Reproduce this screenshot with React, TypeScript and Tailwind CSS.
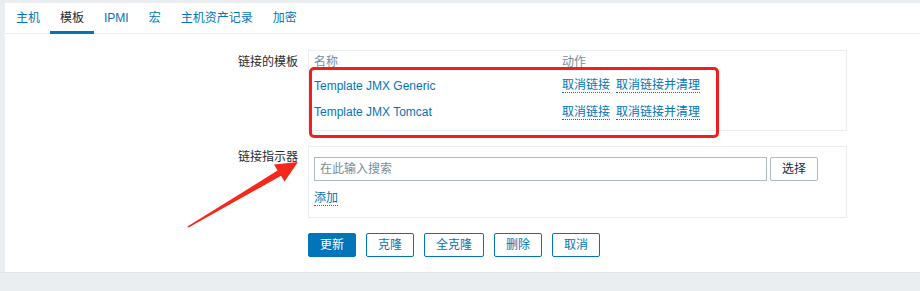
import React from "react";

const font = { fontFamily: '"Liberation Sans", Arial, "Noto Sans CJK SC", sans-serif' };

function Tab({ label, active }: { label: string; active?: boolean }) {
  return (
    <div
      className={
        "relative h-[30px] px-[10px] flex items-center text-[12px] " +
        (active ? "text-[#1f2c33]" : "text-[#0275b8]")
      }
    >
      {label}
      {active && <div className="absolute left-0 right-0 bottom-[-1px] h-[3px] bg-[#0275b8]" />}
    </div>
  );
}

function DLink({ children }: { children: React.ReactNode }) {
  return (
    <span className="text-[#0275b8] border-b border-dotted border-[#0275b8] leading-[14px]">{children}</span>
  );
}

function Btn({ children, primary }: { children: React.ReactNode; primary?: boolean }) {
  return (
    <div
      className={
        "h-[24px] px-[11px] flex items-center rounded-[2px] border text-[12px] " +
        (primary
          ? "bg-[#0275b8] border-[#0275b8] text-white"
          : "bg-white border-[#0275b8] text-[#0275b8]")
      }
    >
      {children}
    </div>
  );
}

export default function App() {
  return (
    <div className="relative w-[920px] h-[291px] bg-[#ebeef0] pt-[3px] pl-[5px] overflow-hidden" style={font}>
      <div className="bg-white h-[269px] flex flex-col">
        <div className="flex pl-[1px] border-b border-[#ebeef0]">
          <Tab label="主机" />
          <Tab label="模板" active />
          <Tab label="IPMI" />
          <Tab label="宏" />
          <Tab label="主机资产记录" />
          <Tab label="加密" />
        </div>
        <div className="pt-[16px] flex flex-col">
          {/* Row 1 */}
          <div className="flex">
            <div className="w-[293px] text-right text-[12px] text-[#1f2c33] pt-[5px] leading-[14px]">链接的模板</div>
            <div className="ml-[10px] w-[539px] h-[81px] border border-[#ebeef0] px-[5px] text-[12px]">
              <div className="flex h-[22px] items-center text-[#768d99]">
                <div className="w-[248px]">名称</div>
                <div>动作</div>
              </div>
              <div className="flex h-[25px] items-center">
                <div className="w-[248px] text-[#0275b8]">Template JMX Generic</div>
                <div className="flex gap-[6px]">
                  <DLink>取消链接</DLink>
                  <DLink>取消链接并清理</DLink>
                </div>
              </div>
              <div className="flex h-[28px] items-center">
                <div className="w-[248px] text-[#0275b8]">Template JMX Tomcat</div>
                <div className="flex gap-[6px]">
                  <DLink>取消链接</DLink>
                  <DLink>取消链接并清理</DLink>
                </div>
              </div>
            </div>
          </div>
          {/* Row 2 */}
          <div className="flex mt-[15px]">
            <div className="w-[293px] text-right text-[12px] text-[#1f2c33] pt-[4px] leading-[14px]">链接指示器</div>
            <div className="ml-[10px] w-[539px] h-[72px] border border-[#ebeef0] px-[5px] pt-[10px] text-[12px]">
              <div className="flex gap-[3px]">
                <div className="w-[453px] h-[24px] border border-[#acbbc2] flex items-center px-[5px] text-[#768d99]">
                  在此输入搜索
                </div>
                <div className="w-[48px] h-[24px] border border-[#acbbc2] rounded-[2px] flex items-center justify-center text-[#1f2c33]">
                  选择
                </div>
              </div>
              <div className="mt-[10px] flex">
                <DLink>添加</DLink>
              </div>
            </div>
          </div>
          {/* Buttons */}
          <div className="flex mt-[15px] pl-[303px] gap-[10px]">
            <Btn primary>更新</Btn>
            <Btn>克隆</Btn>
            <Btn>全克隆</Btn>
            <Btn>删除</Btn>
            <Btn>取消</Btn>
          </div>
        </div>
      </div>
      <div className="absolute left-0 right-0 top-[272px] h-px bg-[#dfe4e7]" />
      {/* annotations */}
      <div className="absolute left-[309px] top-[67px] w-[410px] h-[71px] border-[3px] border-[#f21d1d] rounded-[5px]" />
      <svg className="absolute left-0 top-0" width="920" height="291">
        <polygon
          points="187.4,226.4 277.5,170.6 274,164.5 298,162 284.5,181.5 281,175.8 188.6,227.6"
          fill="#f5281c"
        />
      </svg>
    </div>
  );
}
